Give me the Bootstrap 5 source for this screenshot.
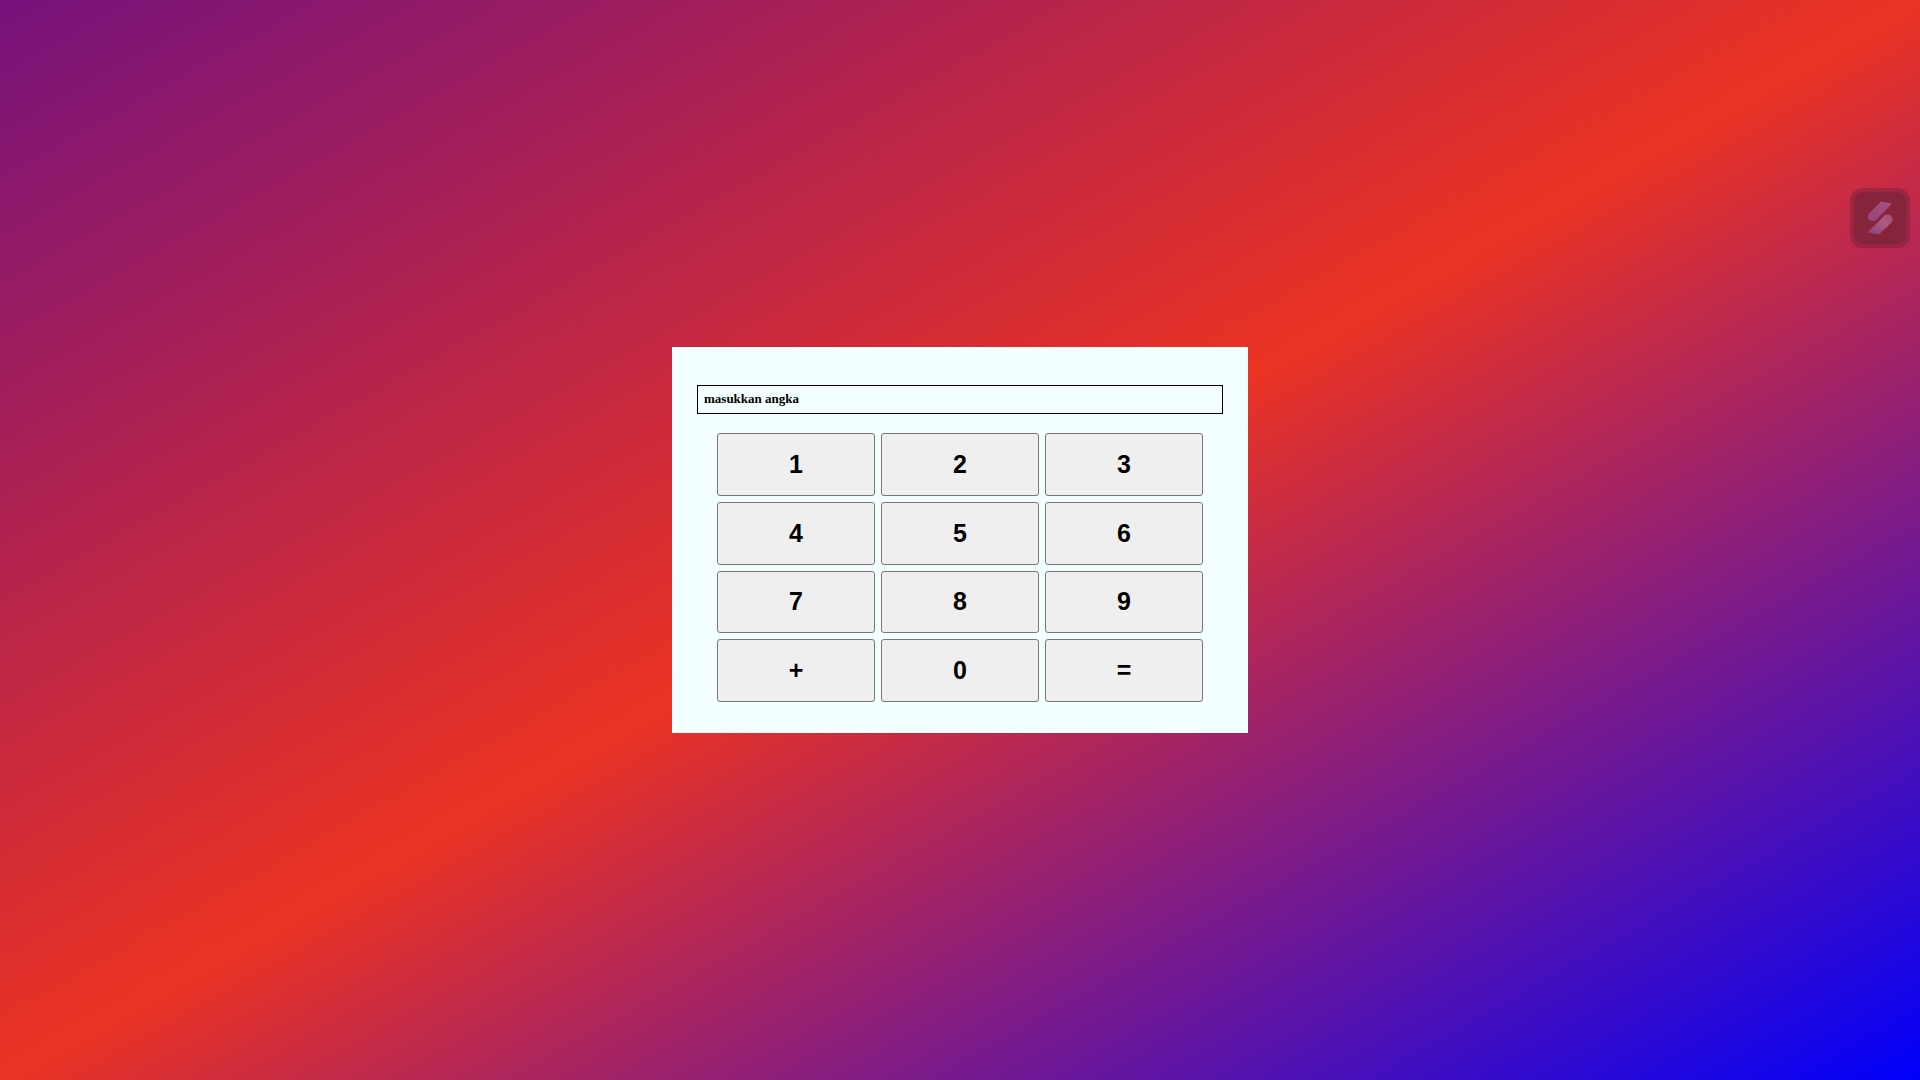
<!DOCTYPE html>
<html lang="id">
<head>
<meta charset="utf-8">
<meta name="viewport" content="width=device-width, initial-scale=1">
<title>Kalkulator</title>
<link href="https://cdn.jsdelivr.net/npm/bootstrap@5.3.0/dist/css/bootstrap.min.css" rel="stylesheet">
<style>
body { background: linear-gradient(to bottom right, #76127c, #eb3323, #0000fb) no-repeat; }
.calc { width: 30%; min-width: 320px; padding: 38px 25px 31px; background: #f3ffff; }
.calc-display {
  height: 29px; padding: 0 6px 2px; border: 1px solid #000; background: transparent; color: #000;
  font: bold 13px "Liberation Serif", serif;
}
.calc-keys {
  min-height: 269px; margin: 19px 20px 0; display: grid; gap: 6px;
  grid-template-columns: repeat(3, 1fr); grid-template-rows: repeat(4, 1fr);
}
.calc-key {
  padding: 0; border: 1px solid #767676; border-radius: 3px; background: #efefef; color: #000;
  font: bold 25px "Liberation Sans", sans-serif;
}
.calc-key:hover { background: #e2e2e2; }
.side-tool {
  top: 188px; right: 10px; width: 60px; height: 60px; padding: 0;
  border: 4px solid rgba(118, 33, 60, .5); border-radius: 13px; background: #86243c; background-clip: padding-box;
}
</style>
</head>
<body class="min-vh-100 d-flex align-items-center justify-content-center">
<main class="calc">
  <input class="calc-display d-block w-100 rounded-0" type="text" value="masukkan angka" aria-label="Layar kalkulator" readonly>
  <div class="calc-keys">
    <button type="button" class="calc-key">1</button>
    <button type="button" class="calc-key">2</button>
    <button type="button" class="calc-key">3</button>
    <button type="button" class="calc-key">4</button>
    <button type="button" class="calc-key">5</button>
    <button type="button" class="calc-key">6</button>
    <button type="button" class="calc-key">7</button>
    <button type="button" class="calc-key">8</button>
    <button type="button" class="calc-key">9</button>
    <button type="button" class="calc-key">+</button>
    <button type="button" class="calc-key">0</button>
    <button type="button" class="calc-key">=</button>
  </div>
</main>
<button type="button" class="side-tool position-fixed d-flex align-items-center justify-content-center" aria-label="Buka alat">
  <svg width="26" height="34" viewBox="0 0 26 34" aria-hidden="true">
    <defs>
      <linearGradient id="upper" x1="1" y1="0" x2="0" y2="1"><stop offset="0" stop-color="#a6517c"/><stop offset="1" stop-color="#98457f"/></linearGradient>
      <linearGradient id="lower" x1="1" y1="0" x2="0" y2="1"><stop offset="0" stop-color="#a44d79"/><stop offset=".4" stop-color="#ad5c7d"/><stop offset="1" stop-color="#853d80"/></linearGradient>
    </defs>
    <path fill="url(#upper)" d="M14 0.500L25 2.500L10 18C8.500 19.700 7.500 20 6 20C3 20 1 18 1 15.500C1 13.500 2 12.500 3 11.500Z"/>
    <path fill="url(#lower)" d="M12 33.500L0.500 31.500L16 16C17.500 14.200 18.500 13.500 20.500 13.500C23.500 13.500 25.500 15.500 25.500 18.500C25.500 20.500 24.500 21.500 23.500 22.500Z"/>
  </svg>
</button>
<script src="https://cdn.jsdelivr.net/npm/bootstrap@5.3.0/dist/js/bootstrap.bundle.min.js"></script>
</body>
</html>
